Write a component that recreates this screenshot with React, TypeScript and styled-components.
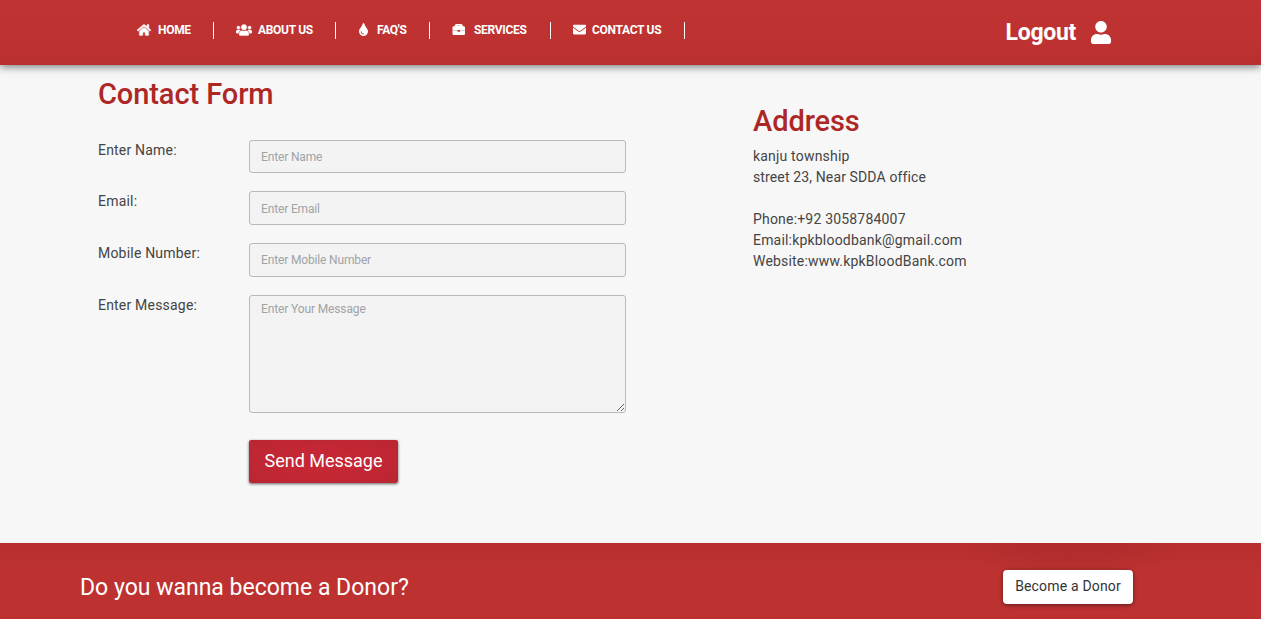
import React from "react";
import styled, { createGlobalStyle } from "styled-components";
import { FaHome, FaUsers, FaTint, FaEnvelope, FaUser } from "react-icons/fa";

const GlobalStyle = createGlobalStyle`
  * { box-sizing: border-box; }
  body {
    margin: 0;
    background: #f7f7f7;
    color: #444;
    font: 14px/21px Roboto, "Liberation Sans", sans-serif;
    overflow: hidden;
  }
`;

const Page = styled.div`
  display: flex;
  flex-direction: column;
  height: 619px;
`;

const Header = styled.header`
  display: flex;
  justify-content: space-between;
  flex: none;
  height: 65px;
  padding: 0 149px 0 115px;
  color: #fff;
  background: linear-gradient(#bf3433, #bd3231 70%, #b92f2e);
  box-shadow: 0 2px 8px rgba(0, 0, 0, 0.5);
`;

const Nav = styled.nav`
  display: flex;
  height: 17px;
  margin-top: 22px;
`;

const NavItem = styled.a<{ $width: number }>`
  display: flex;
  width: ${(p) => p.$width}px;
  padding-left: 22px;
  border-right: 1px solid #fff;
  font-size: 12px;
  font-weight: 700;
  line-height: 16px;
  letter-spacing: -0.3px;
  white-space: nowrap;
`;

const NavIcon = styled.span<{ $width: number; $bold?: boolean }>`
  display: flex;
  align-items: center;
  flex: none;
  width: ${(p) => p.$width}px;
  height: 15px;

  svg {
    stroke: #fff;
    stroke-width: ${(p) => (p.$bold ? 16 : 0)};
  }
`;

const Logout = styled.a`
  display: flex;
  align-items: center;
  gap: 13px;
  height: 64px;
  font-size: 23px;
  font-weight: 700;
  letter-spacing: -0.3px;

  svg { margin-right: -1px; height: 23px; }
`;

const Main = styled.main`
  display: grid;
  grid-template-columns: 655px 1fr;
  flex: 1;
  padding: 13px 98px 0;
`;

const Title = styled.h2`
  margin: 0;
  color: #ad2727;
  font-size: 29px;
  font-weight: 500;
  line-height: 32px;
  letter-spacing: -0.08px;
`;

const Form = styled.form`
  display: flex;
  flex-direction: column;
`;

const Fields = styled.div`
  display: grid;
  gap: 18px;
  margin-top: 30px;
`;

const Row = styled.label`
  display: grid;
  grid-template-columns: 151px 377px;
  letter-spacing: 0.2px;
`;

const Input = styled.input<{ $height: number; $drop: number }>`
  height: ${(p) => p.$height}px;
  padding: ${(p) => p.$drop}px 11px 0;
  border: 1px solid #b3bac0;
  border-radius: 3px;
  background: #f3f3f3;
  font: 12px Roboto, "Liberation Sans", sans-serif;
  letter-spacing: -0.15px;
  &::placeholder { color: #a0a3a6; opacity: 1; }
`;

const Message = styled.textarea`
  display: block;
  height: 118px;
  padding: 5px 11px;
  border: 1px solid #b3bac0;
  border-radius: 3px;
  background: #f3f3f3;
  font: 12px/17px Roboto, "Liberation Sans", sans-serif;
  letter-spacing: -0.13px;
  resize: both;
  &::placeholder { color: #a0a3a6; opacity: 1; }
`;

const Send = styled.button`
  width: 149px;
  height: 43px;
  margin: 27px 0 0 151px;
  padding: 0 0 2px;
  border: 0;
  border-radius: 2px;
  color: #fff;
  background: radial-gradient(ellipse at center, #c62734 30%, #b92632 100%);
  box-shadow: 0 1px 3px rgba(0, 0, 0, 0.6);
  font: 18px Roboto, "Liberation Sans", sans-serif;
`;

const Address = styled.section`
  padding-top: 27px;
`;

const Details = styled.p`
  margin: 9px 0 0;
  letter-spacing: 0.19px;
`;

const Street = styled.span`
  letter-spacing: 0.13px;
  font-variant-ligatures: common-ligatures;
`;

const Footer = styled.footer`
  display: flex;
  align-items: center;
  justify-content: space-between;
  flex: none;
  height: 76px;
  padding: 12px 128px 0 80px;
  color: #fff;
  background:
    radial-gradient(ellipse 120px 34px at 1072px 0, #b12c2d 20%, transparent),
    linear-gradient(#b72e2e, #bd3231 28px);
  font-size: 23px;
`;

const DonorButton = styled.button`
  width: 130px;
  height: 34px;
  border: 0;
  border-radius: 4px;
  padding: 0 0 2px;
  background: #fff;
  color: #333;
  box-shadow: 0 1px 4px rgba(0, 0, 0, 0.5);
  font: 14px Roboto, "Liberation Sans", sans-serif;
  letter-spacing: 0.17px;
`;

const CaseIcon = () => (
  <svg width="14" height="14" viewBox="0 0 14 14" fill="#fff">
    <path
      fillRule="evenodd"
      d="M4.500 1h4.500q1.500 0 2 2.200h.8Q13 3.200 13 4.500V6.900H.500V4.500Q.500 3.200 1.700 3.200H2.500Q3 1 4.500 1zM5 2.500v.3h3.500v-.3zM.500 7.200h5v1.500h2.500V7.200H13v3.600q0 1.200-1.200 1.200H1.700Q.500 12 .500 10.800z"
    />
  </svg>
);

const navItems = [
  { label: "HOME", icon: <FaHome size={14} />, width: 99, iconWidth: 21, bold: true },
  { label: "ABOUT US", icon: <FaUsers size={16} />, width: 122, iconWidth: 22, bold: true },
  { label: "FAQ'S", icon: <FaTint size={13} style={{ marginLeft: -1 }} />, width: 94, iconWidth: 19 },
  { label: "SERVICES", icon: <CaseIcon />, width: 121, iconWidth: 22 },
  { label: "CONTACT US", icon: <FaEnvelope size={13} />, width: 134, iconWidth: 19 },
];

const fields = [
  { label: "Enter Name:", hint: "Enter Name", height: 33, drop: 0 },
  { label: "Email:", hint: "Enter Email", height: 34, drop: 2 },
  { label: "Mobile Number:", hint: "Enter Mobile Number", height: 34, drop: 0 },
];

export default function App() {
  return (
    <Page>
      <GlobalStyle />
      <Header>
        <Nav>
          {navItems.map((n) => (
            <NavItem key={n.label} $width={n.width}>
              <NavIcon $width={n.iconWidth} $bold={n.bold}>
                {n.icon}
              </NavIcon>
              {n.label}
            </NavItem>
          ))}
        </Nav>
        <Logout>
          Logout <FaUser size={24} />
        </Logout>
      </Header>
      <Main>
        <Form>
          <Title>Contact Form</Title>
          <Fields>
            {fields.map((f) => (
              <Row key={f.label}>
                {f.label}
                <Input $height={f.height} $drop={f.drop} placeholder={f.hint} />
              </Row>
            ))}
            <Row>
              Enter Message:
              <Message placeholder="Enter Your Message" />
            </Row>
          </Fields>
          <Send type="button">Send Message</Send>
        </Form>
        <Address>
          <Title>Address</Title>
          <Details>
            kanju township
            <br />
            <Street>street 23, Near SDDA office</Street>
            <br />
            <br />
            Phone:+92 3058784007
            <br />
            Email:kpkbloodbank@gmail.com
            <br />
            Website:www.kpkBloodBank.com
          </Details>
        </Address>
      </Main>
      <Footer>
        Do you wanna become a Donor?
        <DonorButton>Become a Donor</DonorButton>
      </Footer>
    </Page>
  );
}
